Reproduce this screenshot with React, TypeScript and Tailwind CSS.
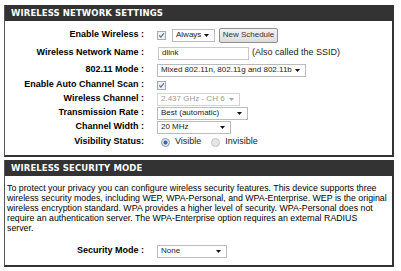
import React from "react";

const sans = "font-['Liberation_Sans',Arial,sans-serif]";

function Arrow({ disabled }: { disabled?: boolean }) {
  return (
    <svg width="5" height="3" viewBox="0 0 5 3" className="shrink-0">
      <path d="M0 0H5L2.5 3Z" fill={disabled ? "#a8a8a8" : "#111"} />
    </svg>
  );
}

function Select({ value, width, disabled }: { value: string; width: string; disabled?: boolean }) {
  return (
    <div
      className={`${width} h-[13px] flex items-center justify-between border bg-white pl-[3px] pr-[5px] text-[8px] leading-none ${
        disabled ? "border-[#d4d4d4] text-[#9a9a9a]" : "border-[#bcbcbc] text-[#222]"
      }`}
    >
      <span className="whitespace-nowrap">{value}</span>
      <Arrow disabled={disabled} />
    </div>
  );
}

function Checkbox() {
  return (
    <svg width="9" height="9" viewBox="0 0 9 9" className="shrink-0">
      <rect x="0.5" y="0.5" width="8" height="8" fill="#eef0f4" stroke="#a3abb8" />
      <path d="M2.2 4.4L3.8 6.2L6.9 2.4" fill="none" stroke="#5a6c94" strokeWidth="1.1" />
    </svg>
  );
}

function Radio({ on }: { on?: boolean }) {
  return (
    <svg width="9" height="9" viewBox="0 0 9 9" className="shrink-0">
      <circle cx="4.5" cy="4.5" r="4" fill={on ? "#d9e3ee" : "#e6e6e6"} stroke={on ? "#8d9db2" : "#c4c4c4"} />
      {on && <circle cx="4.5" cy="4.5" r="2" fill="#3d6b9b" />}
    </svg>
  );
}

function Row({ label, h, children }: { label: string; h: string; children: React.ReactNode }) {
  return (
    <div className={`flex items-center ${h}`}>
      <div className="w-[139px] text-right font-bold text-[9px] text-black whitespace-nowrap">{label}</div>
      <div className="flex items-center pl-[13px]">{children}</div>
    </div>
  );
}

function Header({ title }: { title: string }) {
  return (
    <div className="h-[16px] bg-[#333333] flex items-center pl-[6px]">
      <span className="font-['DejaVu_Sans',Verdana,sans-serif] font-bold text-[8.5px] text-white tracking-[0.1px]">
        {title}
      </span>
    </div>
  );
}

export default function App() {
  return (
    <div className={`w-[401px] h-[271px] bg-white pt-[5px] pl-[4px] ${sans}`}>
      <section className="w-[390px] border-l border-l-[#555] border-r-2 border-b-2 border-[#333]">
        <Header title="WIRELESS NETWORK SETTINGS" />
        <div className="pt-[5px] pb-[5px]">
          <Row label="Enable Wireless :" h="h-[18px]">
            <Checkbox />
            <div className="ml-[6px]">
              <Select value="Always" width="w-[43px]" />
            </div>
            <button className="ml-[4px] h-[15px] w-[59px] rounded-[2px] border border-[#8f8f8f] bg-gradient-to-b from-[#f4f4f4] to-[#dcdcdc] text-[8px] text-[#333] leading-none">
              New Schedule
            </button>
          </Row>
          <Row label="Wireless Network Name :" h="h-[18px]">
            <div className="ml-[1px] w-[91px] h-[13px] border border-[#c8c8c8] bg-white flex items-center pl-[3px] text-[8px] text-[#222]">
              dlink
            </div>
            <span className="ml-[3px] text-[9px] text-[#222] whitespace-nowrap">(Also called the SSID)</span>
          </Row>
          <Row label="802.11 Mode :" h="h-[16px]">
            <Select value="Mixed 802.11n, 802.11g and 802.11b" width="w-[149px]" />
          </Row>
          <Row label="Enable Auto Channel Scan :" h="h-[14px]">
            <Checkbox />
          </Row>
          <Row label="Wireless Channel :" h="h-[14px]">
            <Select value="2.437 GHz - CH 6" width="w-[83px]" disabled />
          </Row>
          <Row label="Transmission Rate :" h="h-[14px]">
            <Select value="Best (automatic)" width="w-[91px]" />
          </Row>
          <Row label="Channel Width :" h="h-[14px]">
            <Select value="20 MHz" width="w-[74px]" />
          </Row>
          <Row label="Visibility Status:" h="h-[16px]">
            <div className="ml-[4px] flex items-center gap-[5px]">
              <Radio on />
              <span className="text-[9px] text-[#222]">Visible</span>
            </div>
            <div className="ml-[10px] flex items-center gap-[5px]">
              <Radio />
              <span className="text-[9px] text-[#222]">Invisible</span>
            </div>
          </Row>
        </div>
      </section>

      <section className="mt-[3px] w-[390px] border-l border-l-[#555] border-r-2 border-b-2 border-[#333]">
        <Header title="WIRELESS SECURITY MODE" />
        <p className="pt-[7px] pl-[2px] text-[8.8px] leading-[10px] text-black whitespace-nowrap">
          To protect your privacy you can configure wireless security features. This device supports three
          <br />
          wireless security modes, including WEP, WPA-Personal, and WPA-Enterprise. WEP is the original
          <br />
          wireless encryption standard. WPA provides a higher level of security. WPA-Personal does not
          <br />
          require an authentication server. The WPA-Enterprise option requires an external RADIUS
          <br />
          server.
        </p>
        <div className="mt-[9px] pb-[5px]">
          <Row label="Security Mode :" h="h-[18px]">
            <Select value="None" width="w-[70px]" />
          </Row>
        </div>
      </section>
    </div>
  );
}
